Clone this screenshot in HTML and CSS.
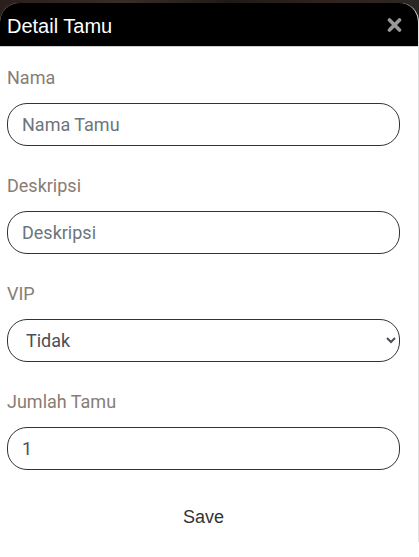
FILE: index.html
```html
<!DOCTYPE html>
<html lang="id">
<head>
<meta charset="utf-8">
<title>Detail Tamu</title>
<link rel="stylesheet" href="styles.css">
</head>
<body>
<div class="modal">
  <div class="modal-header">
    <h5 class="modal-title">Detail Tamu</h5>
    <button class="btn-close" type="button" aria-label="Close">
      <svg width="15" height="14" viewBox="0 0 15 14"><path d="M2.5 2 L12.5 12 M12.5 2 L2.5 12" stroke="#999" stroke-width="3.6" stroke-linecap="round"/></svg>
    </button>
  </div>
  <form class="modal-body">
    <div class="field">
      <label class="form-label">Nama</label>
      <input class="form-control" type="text" placeholder="Nama Tamu">
    </div>
    <div class="field">
      <label class="form-label">Deskripsi</label>
      <input class="form-control" type="text" placeholder="Deskripsi">
    </div>
    <div class="field">
      <label class="form-label">VIP</label>
      <select class="form-control form-select">
        <option>Tidak</option>
        <option>Ya</option>
      </select>
    </div>
    <div class="field">
      <label class="form-label">Jumlah Tamu</label>
      <input class="form-control" type="number" value="1">
    </div>
    <div class="actions">
      <button class="btn-save" type="button">Save</button>
    </div>
  </form>
</div>
</body>
</html>
```
FILE: styles.css
```css
html, body {
  margin: 0;
  padding: 0;
}
body {
  background: linear-gradient(to right, #2a1f1b 0%, #3a2c27 30%, #1e1a18 55%, #33231f 80%, #2a2624 100%) top / 100% 40px no-repeat, #fff;
  width: 419px;
  height: 557px;
}
.modal {
  margin-top: 3px;
  width: 418px;
  height: 539px;
  background: #fff;
  border-right: 1px solid #e3e3e3;
  border-radius: 19px 19px 0 0;
  overflow: hidden;
  box-sizing: content-box;
}
.modal-header {
  height: 44px;
  box-sizing: border-box;
  background: #000;
  border-bottom: 1px solid #cfcfcf;
  display: flex;
  align-items: center;
  justify-content: space-between;
  padding: 3px 16px 0 7px;
}
.modal-title {
  margin: 0;
  font-family: "Liberation Sans", Arial, sans-serif;
  font-size: 20px;
  font-weight: normal;
  line-height: 23px;
  color: #fff;
}
.btn-close {
  background: none;
  border: 0;
  padding: 0;
  margin-top: -3px;
  width: 15px;
  height: 14px;
  display: flex;
}
.modal-body {
  padding: 17px 18px 0 7px;
  display: flex;
  flex-direction: column;
  gap: 26px;
}
.field {
  display: flex;
  flex-direction: column;
  gap: 12px;
}
.form-label {
  font-family: Roboto, "Liberation Sans", sans-serif;
  font-size: 18px;
  line-height: 27px;
  color: #877d74;
}
.form-control {
  box-sizing: border-box;
  height: 43px;
  width: 100%;
  border: 1.5px solid #333;
  border-radius: 20px;
  padding: 0 14px;
  font-family: Roboto, "Liberation Sans", sans-serif;
  font-size: 18px;
  color: #495057;
  background: #fff;
  outline: none;
}
.form-control::placeholder {
  color: #6c757d;
}
.form-select {
  padding: 0 8px 0 14px;
}
.actions {
  display: flex;
  justify-content: center;
  margin-top: 5px;
}
.btn-save {
  background: none;
  border: 0;
  padding: 6px 12px;
  font-family: "Liberation Sans", Arial, sans-serif;
  font-size: 18px;
  line-height: 21px;
  color: #333;
}
```
